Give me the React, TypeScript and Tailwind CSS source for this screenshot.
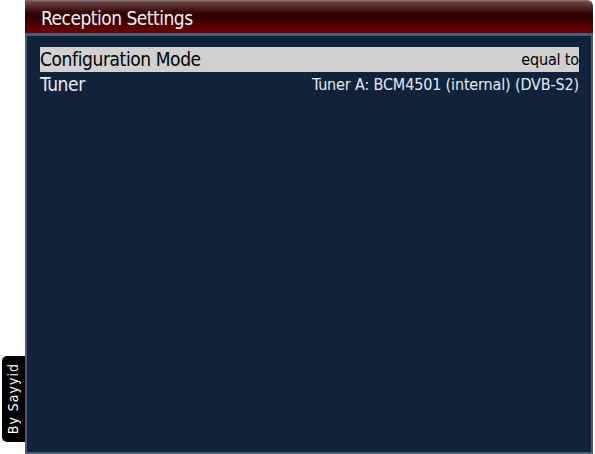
import React from 'react';

const rows = [
    { label: 'Configuration Mode', value: 'equal to' },
    { label: 'Tuner', value: 'Tuner A: BCM4501 (internal) (DVB-S2)' },
];

const App: React.FC = () => {
    const selected = 0;

    return (
        <div className="w-[595px] h-[454px] bg-white flex font-['DejaVu_Sans_Condensed','DejaVu_Sans',sans-serif] overflow-hidden">
            {/* Etiqueta lateral */}
            <div className="w-[25px] flex flex-col justify-end pb-[12px]">
                <div className="ml-[2px] h-[86px] bg-black rounded-l-[5px] flex items-center justify-center">
                    <span className="text-white text-[14px] tracking-[1px] whitespace-nowrap [writing-mode:vertical-rl] rotate-180">
                        By Sayyid
                    </span>
                </div>
            </div>

            {/* Ventana */}
            <div className="w-[568px] flex flex-col">
                <div className="h-[33px] rounded-tr-[6px] bg-[linear-gradient(to_bottom,#8c7c7c_0px,#6b4545_2px,#3a0a0a_12px,#2c0000_16px,#6a0000_32px)] flex items-center pl-[16px]">
                    <span className="text-[#f0f0f0] text-[19px] tracking-[-0.5px] leading-none mt-[3px]">Reception Settings</span>
                </div>
                <div className="flex-1 border-[2px] border-t-[3px] border-[#4b5d75] bg-[#11223a] pt-[11px] pl-[13px] pr-[12px]">
                    {rows.map((row, i) => (
                        <div
                            key={row.label}
                            className={`h-[25px] flex items-center justify-between ${
                                i === selected ? 'bg-[#d0d0d0] text-black' : 'text-[#e4ecf4]'
                            }`}
                        >
                            <span className="text-[19px] tracking-[-0.4px] leading-none">{row.label}</span>
                            <span className="text-[16px] tracking-[-0.15px] leading-none">{row.value}</span>
                        </div>
                    ))}
                </div>
            </div>
        </div>
    );
};

export default App;
